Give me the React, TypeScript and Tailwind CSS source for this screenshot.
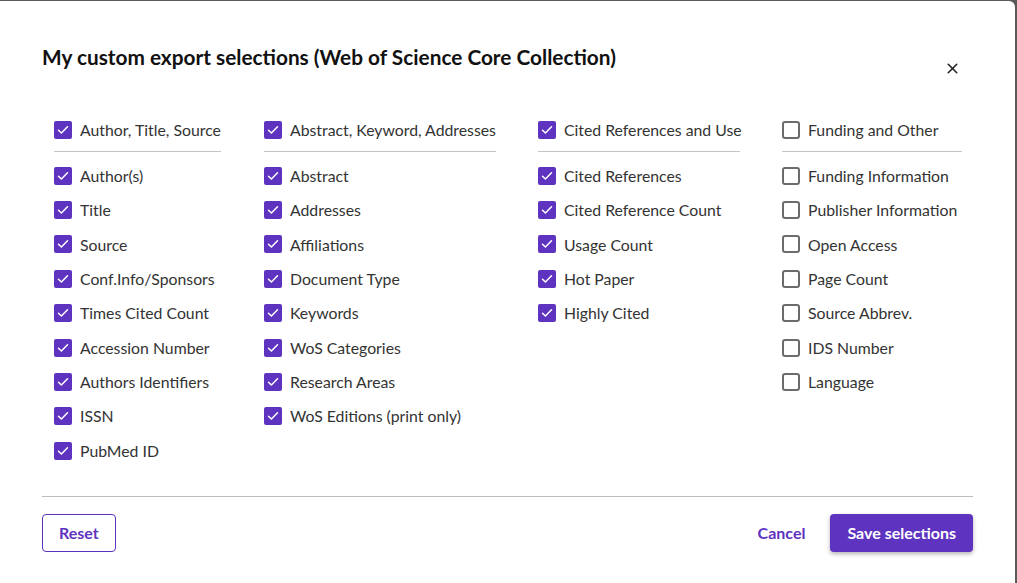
import { X } from "lucide-react";

type Item = { label: string; checked: boolean };
type Group = { title: string; checked: boolean; width: string; lineWidth: string; items: Item[] };

const groups: Group[] = [
  {
    title: "Author, Title, Source",
    checked: true,
    width: "w-[210px]",
    lineWidth: "w-[167px]",
    items: [
      "Author(s)",
      "Title",
      "Source",
      "Conf.Info/Sponsors",
      "Times Cited Count",
      "Accession Number",
      "Authors Identifiers",
      "ISSN",
      "PubMed ID",
    ].map((label) => ({ label, checked: true })),
  },
  {
    title: "Abstract, Keyword, Addresses",
    checked: true,
    width: "w-[274px]",
    lineWidth: "w-[232px]",
    items: [
      "Abstract",
      "Addresses",
      "Affiliations",
      "Document Type",
      "Keywords",
      "WoS Categories",
      "Research Areas",
      "WoS Editions (print only)",
    ].map((label) => ({ label, checked: true })),
  },
  {
    title: "Cited References and Use",
    checked: true,
    width: "w-[244px]",
    lineWidth: "w-[202px]",
    items: ["Cited References", "Cited Reference Count", "Usage Count", "Hot Paper", "Highly Cited"].map(
      (label) => ({ label, checked: true })
    ),
  },
  {
    title: "Funding and Other",
    checked: false,
    width: "w-[190px]",
    lineWidth: "w-[180px]",
    items: [
      "Funding Information",
      "Publisher Information",
      "Open Access",
      "Page Count",
      "Source Abbrev.",
      "IDS Number",
      "Language",
    ].map((label) => ({ label, checked: false })),
  },
];

function Checkbox({ checked }: { checked: boolean }) {
  if (!checked) {
    return <span className="w-[18px] h-[18px] rounded-[3px] border-2 border-[#6b6b6b] bg-white shrink-0" />;
  }
  return (
    <span className="w-[18px] h-[18px] rounded-[2px] bg-[#5e33bf] flex items-center justify-center shrink-0">
      <svg width="12" height="10" viewBox="0 0 12 10" fill="none">
        <path d="M1.5 5.2 L4.4 8 L10.5 1.8" stroke="white" strokeWidth="1.5" strokeLinecap="round" strokeLinejoin="round" />
      </svg>
    </span>
  );
}

function Row({ label, checked }: Item) {
  return (
    <div className="h-[34.4px] flex items-center gap-[8px]">
      <Checkbox checked={checked} />
      <span className="text-[15.8px] text-[#333333] whitespace-nowrap">{label}</span>
    </div>
  );
}

export default function App() {
  return (
    <div className="w-[1017px] h-[583px] bg-[#5a5a5a] overflow-hidden">
      <div
        className="w-[1015px] h-[583px] mt-px bg-white rounded-tr-[6px] px-[42px] flex flex-col"
        style={{ fontFamily: "Lato, 'Liberation Sans', sans-serif" }}
      >
        <div className="flex justify-between items-start pt-[42px]">
          <h2 className="text-[20.8px] leading-[28px] font-bold text-[#111111]">
            My custom export selections (Web of Science Core Collection)
          </h2>
          <button className="mt-[13px] mr-[9px] w-[24px] h-[24px] flex items-center justify-center text-[#222222]">
            <X className="w-[17px] h-[17px]" strokeWidth={2.2} />
          </button>
        </div>

        <div className="flex pl-[12px] mt-[33px]">
          {groups.map((g) => (
            <div key={g.title} className={g.width}>
              <Row label={g.title} checked={g.checked} />
              <div className={`${g.lineWidth} h-px bg-[#c4c4c4] mt-[4px] mb-[6px]`} />
              {g.items.map((it) => (
                <Row key={it.label} {...it} />
              ))}
            </div>
          ))}
        </div>

        <div className="flex-1" />
        <div className="h-px bg-[#bdbdbd]" />
        <div className="flex items-center justify-between pt-[17px] pb-[32px]">
          <button className="h-[38px] px-[16px] border border-[#5e33bf] rounded-[4px] text-[#5e33bf] font-bold text-[16px]">
            Reset
          </button>
          <div className="flex items-center gap-[25px]">
            <button className="text-[#5e33bf] font-bold text-[16px]">Cancel</button>
            <button className="h-[38px] px-[17px] bg-[#5e33bf] rounded-[4px] text-white font-bold text-[16px] shadow-[0_2px_4px_rgba(0,0,0,0.3)]">
              Save selections
            </button>
          </div>
        </div>
      </div>
    </div>
  );
}
